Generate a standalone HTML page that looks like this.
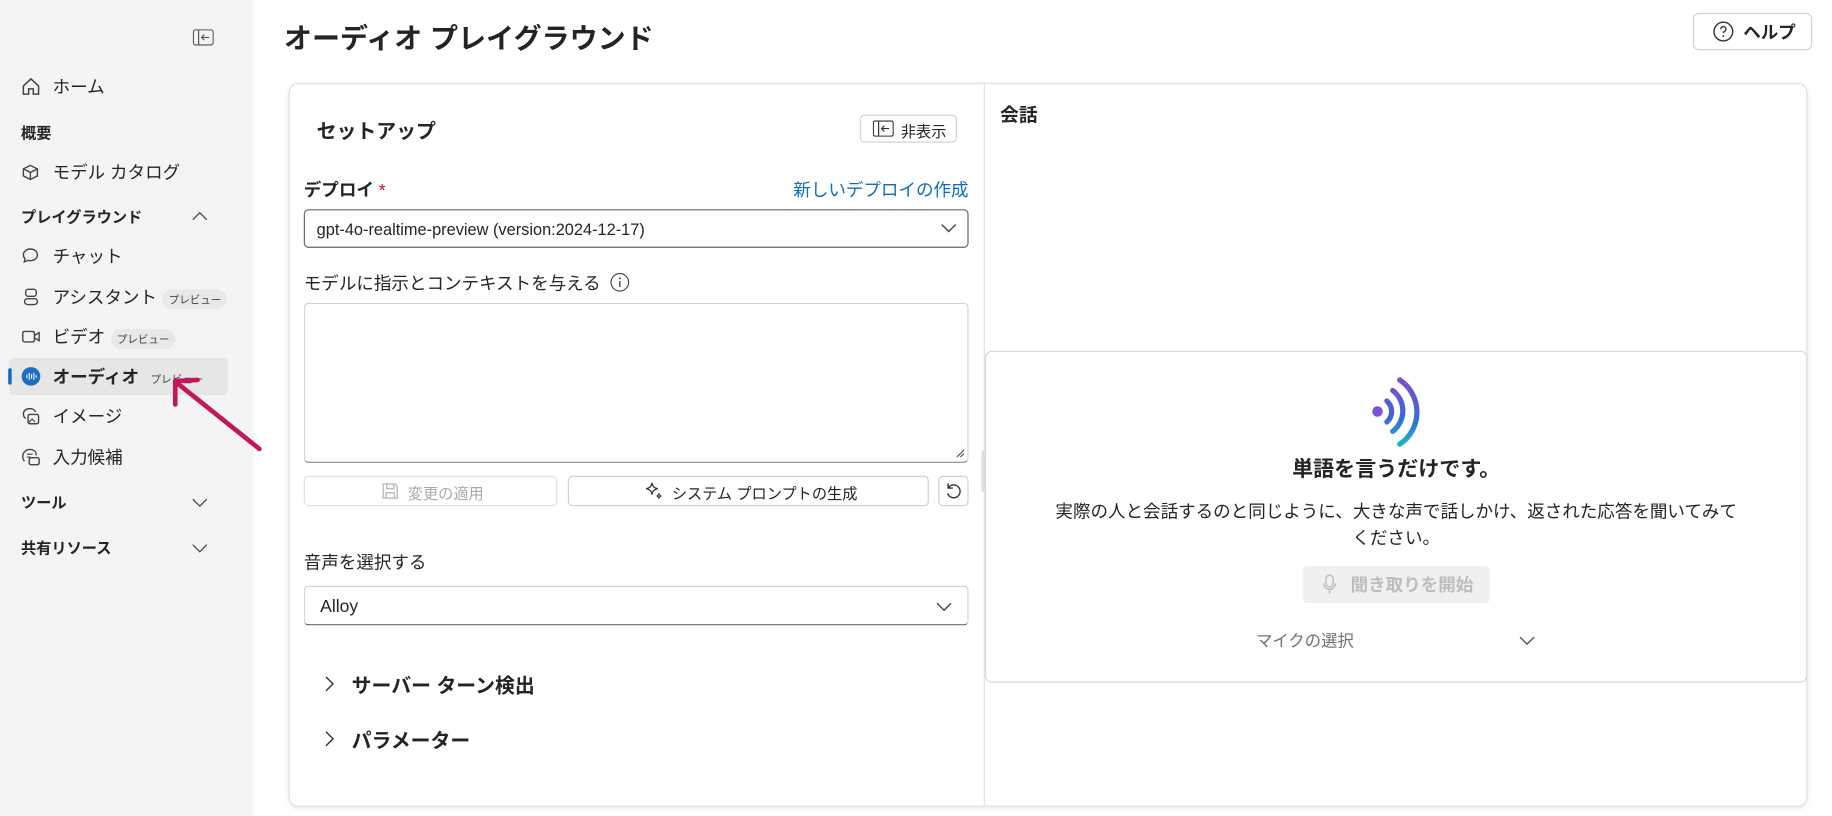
<!DOCTYPE html>
<html><head><meta charset="utf-8"><style>
*{box-sizing:border-box;margin:0;padding:0}
html,body{width:1832px;height:816px;overflow:hidden;background:#fff}
#w{width:1568px;height:698px;transform:scale(1.16837,1.169);transform-origin:0 0;position:relative;font-family:"Liberation Sans","Noto Sans CJK JP",sans-serif;color:#242424}
.a{position:absolute;white-space:nowrap}
.side{position:absolute;left:0;top:0;width:215px;height:698px;background:#f4f4f4;box-shadow:1px 0 3px rgba(0,0,0,.08)}
.it{position:absolute;left:45px;font-size:15px;transform:translateY(-50%);white-space:nowrap}
.ic{position:absolute;left:18px;width:17px;height:17px;transform:translateY(-50%)}
.sec{position:absolute;left:18px;font-size:13px;font-weight:bold;transform:translateY(-50%);white-space:nowrap}
.chev{position:absolute;left:164px;transform:translateY(-50%)}
.pv{display:inline-block;font-size:9px;background:#e8e8e8;border-radius:9px;padding:2px 5px;margin-left:5px;vertical-align:middle;color:#424242}
.box{position:absolute;border:1px solid #d1d1d1;border-radius:4px;background:#fff}
.lbl{position:absolute;font-size:15px;transform:translateY(-50%);white-space:nowrap}
</style></head><body><div id="w">
<div class="side">
<svg class="a" style="left:165px;top:25px" width="18" height="14" viewBox="0 0 18 14"><rect x=".5" y=".5" width="17" height="13" rx="2" fill="none" stroke="#555"/><line x1="5" y1="1" x2="5" y2="13" stroke="#555"/><path d="M14 7H8M10 4.5L7.5 7 10 9.5" fill="none" stroke="#555"/></svg>
<svg class="ic" style="top:74px" viewBox="0 0 17 17"><path d="M2 8L8.5 2 15 8V15H10.5V10.5H6.5V15H2Z" fill="none" stroke="#444" stroke-width="1.3"/></svg><div class="it" style="top:74px">ホーム</div>
<div class="sec" style="top:113px">概要</div>
<svg class="ic" style="top:147px" viewBox="0 0 17 17"><path d="M2 6L8 3 14 6V12L8 15 2 12ZM2 6L8 9 14 6M8 9V15" fill="none" stroke="#444" stroke-width="1.2"/></svg><div class="it" style="top:147px">モデル カタログ</div>
<div class="sec" style="top:185px">プレイグラウンド</div>
<svg class="chev" style="top:185px" width="14" height="8" viewBox="0 0 14 8"><path d="M1 7L7 1 13 7" fill="none" stroke="#555" stroke-width="1.2"/></svg>
<svg class="ic" style="top:219px" viewBox="0 0 17 17"><path d="M8 2.5C4.5 2.5 2 4.8 2 7.5c0 1.3.5 2.4 1.4 3.3L2.8 13.5 6 12.2c.6.2 1.3.3 2 .3 3.5 0 6-2.3 6-5S11.5 2.5 8 2.5z" fill="none" stroke="#444" stroke-width="1.2"/></svg><div class="it" style="top:219px">チャット</div>
<svg class="ic" style="top:254px" viewBox="0 0 17 17"><rect x="4" y="2" width="9" height="6" rx="2" fill="none" stroke="#444" stroke-width="1.2"/><rect x="3" y="10" width="11" height="5" rx="2.5" fill="none" stroke="#444" stroke-width="1.2"/></svg><div class="it" style="top:254px">アシスタント<span class="pv">プレビュー</span></div>
<svg class="ic" style="top:288px" viewBox="0 0 17 17"><rect x="1.5" y="4" width="10" height="9" rx="1.5" fill="none" stroke="#444" stroke-width="1.2"/><path d="M11.5 7.5L15.5 5V12L11.5 9.5" fill="none" stroke="#444" stroke-width="1.2"/></svg><div class="it" style="top:288px">ビデオ<span class="pv">プレビュー</span></div>
<div class="a" style="left:8px;top:306px;width:187px;height:32px;background:#e6e6e6;border-radius:4px"></div>
<div class="a" style="left:7px;top:315px;width:3px;height:14px;background:#0f6cbd;border-radius:2px"></div>
<svg class="ic" style="top:322px" viewBox="0 0 17 17"><circle cx="8.5" cy="8.5" r="8" fill="#1f6fc0"/><path d="M5 7v3M7 5.5v6M9 6.5v4M11 5.5v6M13 7.5v2" stroke="#fff" stroke-width=".9"/></svg><div class="it" style="top:322px;font-weight:bold">オーディオ<span class="pv" style="background:none;font-weight:normal">プレビュー</span></div>
<svg class="ic" style="top:356px" viewBox="0 0 17 17"><path d="M4 10.5C2.5 9.5 2 8 2 6.5 2 4 4.5 2 7.5 2c2.3 0 4.3 1.2 5 3" fill="none" stroke="#444" stroke-width="1.2"/><rect x="6" y="7" width="9" height="8" rx="1.5" fill="none" stroke="#444" stroke-width="1.2"/><path d="M6.5 14L9.5 11 12 13.5" fill="none" stroke="#444"/></svg><div class="it" style="top:356px">イメージ</div>
<svg class="ic" style="top:391px" viewBox="0 0 17 17"><path d="M3 12C1.8 11 1.5 9.5 1.5 8 1.5 4.5 4 2 7.5 2S13 4 13 7" fill="none" stroke="#444" stroke-width="1.2"/><rect x="7" y="9" width="8.5" height="6" rx="1.5" fill="none" stroke="#444" stroke-width="1.2"/><path d="M5 6h5M5 8.5h3" stroke="#444"/></svg><div class="it" style="top:391px">入力候補</div>
<div class="sec" style="top:429px">ツール</div>
<svg class="chev" style="top:430px" width="14" height="8" viewBox="0 0 14 8"><path d="M1 1L7 7 13 1" fill="none" stroke="#555" stroke-width="1.2"/></svg>
<div class="sec" style="top:468px">共有リソース</div>
<svg class="chev" style="top:469px" width="14" height="8" viewBox="0 0 14 8"><path d="M1 1L7 7 13 1" fill="none" stroke="#555" stroke-width="1.2"/></svg>
</div>
<svg class="a" style="left:140px;top:315px" width="90" height="75" viewBox="0 0 90 75"><path d="M82 69L12 13" stroke="#c2185b" stroke-width="4" stroke-linecap="round"/><path d="M10 31L10 11 29 10" fill="none" stroke="#c2185b" stroke-width="4" stroke-linecap="round" stroke-linejoin="round"/></svg>

<div class="a" style="left:243px;top:13px;font-size:24px;font-weight:bold">オーディオ プレイグラウンド</div>
<div class="box" style="left:1449px;top:11px;width:102px;height:32px;border-radius:5px"></div>
<svg class="a" style="left:1466px;top:18px" width="18" height="18" viewBox="0 0 18 18"><circle cx="9" cy="9" r="8" fill="none" stroke="#333" stroke-width="1.2"/><path d="M6.8 7a2.2 2.2 0 1 1 3 2c-.6.3-.8.7-.8 1.3" fill="none" stroke="#333" stroke-width="1.2"/><circle cx="9" cy="13" r=".8" fill="#333"/></svg>
<div class="a" style="left:1492px;top:17px;font-size:15px;font-weight:bold">ヘルプ</div>

<div class="a" style="left:247px;top:71px;width:1300px;height:619px;border:1px solid #e0e0e0;border-radius:8px;box-shadow:0 1px 4px rgba(0,0,0,.1)"></div>
<div class="a" style="left:842px;top:72px;width:1px;height:617px;background:#e3e3e3"></div>
<div class="a" style="left:840px;top:385px;width:4px;height:36px;background:#ddd;border-radius:2px"></div>

<div class="a" style="left:271px;top:98px;font-size:17px;font-weight:bold">セットアップ</div>
<div class="box" style="left:736px;top:98px;width:83px;height:24px"></div>
<svg class="a" style="left:747px;top:103px" width="18" height="14" viewBox="0 0 18 14"><rect x=".5" y=".5" width="17" height="13" rx="1.5" fill="none" stroke="#333"/><line x1="5" y1="1" x2="5" y2="13" stroke="#333"/><path d="M14 7H8M10 4.5L7.5 7 10 9.5" fill="none" stroke="#333"/></svg>
<div class="a" style="left:771px;top:102px;font-size:13px">非表示</div>
<div class="lbl" style="left:260px;top:162px;font-weight:bold">デプロイ <span style="color:#c50f1f;font-weight:normal">*</span></div>
<div class="lbl" style="right:739px;top:162px;color:#0f6cbd">新しいデプロイの作成</div>
<div class="box" style="left:260px;top:179px;width:569px;height:33px;border-color:#666"></div>
<div class="lbl" style="left:271px;top:196px;font-size:14px">gpt-4o-realtime-preview (version:2024-12-17)</div>
<svg class="a" style="left:805px;top:191px" width="14" height="8" viewBox="0 0 14 8"><path d="M1 1L7 7 13 1" fill="none" stroke="#444" stroke-width="1.2"/></svg>
<div class="lbl" style="left:260px;top:242px">モデルに指示とコンテキストを与える</div>
<svg class="a" style="left:522px;top:233px" width="17" height="17" viewBox="0 0 17 17"><circle cx="8.5" cy="8.5" r="7.5" fill="none" stroke="#444"/><path d="M8.5 7.5v5" stroke="#444" stroke-width="1.2"/><circle cx="8.5" cy="5" r=".8" fill="#444"/></svg>
<div class="box" style="left:260px;top:259px;width:569px;height:137px;border-bottom-color:#777"></div>
<svg class="a" style="left:818px;top:384px" width="8" height="8" viewBox="0 0 8 8"><path d="M7 1L1 7M7 4L4 7" stroke="#555"/></svg>
<div class="box" style="left:260px;top:407px;width:217px;height:26px;border-color:#e0e0e0"></div>
<svg class="a" style="left:326px;top:412px" width="16" height="16" viewBox="0 0 16 16"><path d="M2 2h10l2 2v10H2z M5 2v4h6V2 M4.5 14V9.5h7V14" fill="none" stroke="#bbb" stroke-width="1.2"/></svg>
<div class="a" style="left:349px;top:412px;font-size:13px;color:#aaa">変更の適用</div>
<div class="box" style="left:486px;top:407px;width:309px;height:26px"></div>
<svg class="a" style="left:551px;top:411px" width="18" height="18" viewBox="0 0 18 18"><path d="M7 2Q7.6 6.4 12 7 7.6 7.6 7 12 6.4 7.6 2 7 6.4 6.4 7 2z" fill="none" stroke="#333" stroke-width="1.1"/><path d="M13 11Q13.3 13 15 13.3 13.3 13.6 13 15.5 12.7 13.6 11 13.3 12.7 13 13 11z" fill="none" stroke="#333"/></svg>
<div class="a" style="left:575px;top:412px;font-size:13px">システム プロンプトの生成</div>
<div class="box" style="left:803px;top:407px;width:26px;height:26px"></div>
<svg class="a" style="left:808px;top:412px" width="16" height="16" viewBox="0 0 16 16"><path d="M3.5 5.5A5.5 5.5 0 1 1 3 10M3.5 1.5v4h4" fill="none" stroke="#333" stroke-width="1.2"/></svg>
<div class="lbl" style="left:260px;top:481px">音声を選択する</div>
<div class="box" style="left:260px;top:501px;width:569px;height:34px;border-bottom-color:#555"></div>
<div class="lbl" style="left:274px;top:519px">Alloy</div>
<svg class="a" style="left:801px;top:515px" width="14" height="8" viewBox="0 0 14 8"><path d="M1 1L7 7 13 1" fill="none" stroke="#444" stroke-width="1.2"/></svg>
<svg class="a" style="left:278px;top:578px" width="8" height="14" viewBox="0 0 8 14"><path d="M1 1L7 7 1 13" fill="none" stroke="#333" stroke-width="1.2"/></svg>
<div class="lbl" style="left:301px;top:585px;font-size:17px;font-weight:bold">サーバー ターン検出</div>
<svg class="a" style="left:278px;top:625px" width="8" height="14" viewBox="0 0 8 14"><path d="M1 1L7 7 1 13" fill="none" stroke="#333" stroke-width="1.2"/></svg>
<div class="lbl" style="left:301px;top:632px;font-size:17px;font-weight:bold">パラメーター</div>

<div class="lbl" style="left:856px;top:97px;font-size:16px;font-weight:bold">会話</div>
<div class="a" style="left:843px;top:300px;width:704px;height:284px;border:1px solid #d6d6d6;border-radius:6px;background:#fff"></div>
<svg class="a" style="left:1170px;top:320px" width="50" height="66" viewBox="0 0 50 66"><defs><linearGradient id="g" x1="0" y1="0" x2="0" y2="1"><stop offset="0" stop-color="#7b4fd1"/><stop offset=".6" stop-color="#3a6ad6"/><stop offset="1" stop-color="#1fb3c4"/></linearGradient></defs><circle cx="9" cy="32" r="4.5" fill="#7b52d3"/><path d="M17 23a12 12 0 0 1 0 18M22 14a22 22 0 0 1 0 35M28 5a33 33 0 0 1 0 55" fill="none" stroke="url(#g)" stroke-width="4.5" stroke-linecap="round"/></svg>
<div class="lbl" style="left:1195px;top:400px;transform:translate(-50%,-50%);font-size:18px;font-weight:bold">単語を言うだけです。</div>
<div class="lbl" style="left:1195px;top:437px;transform:translate(-50%,-50%);font-size:15px">実際の人と会話するのと同じように、大きな声で話しかけ、返された応答を聞いてみて</div>
<div class="lbl" style="left:1195px;top:460px;transform:translate(-50%,-50%);font-size:15px">ください。</div>
<div class="a" style="left:1115px;top:484px;width:160px;height:32px;background:#f0f0f0;border-radius:4px"></div>
<svg class="a" style="left:1132px;top:491px" width="12" height="18" viewBox="0 0 12 18"><rect x="3" y="1" width="6" height="10" rx="3" fill="none" stroke="#bbb" stroke-width="1.2"/><path d="M1 8a5 5 0 0 0 10 0M6 13v4" fill="none" stroke="#bbb" stroke-width="1.2"/></svg>
<div class="lbl" style="left:1156px;top:500px;font-size:15px;font-weight:bold;color:#bdbdbd">聞き取りを開始</div>
<div class="lbl" style="left:1075px;top:548px;font-size:14px;color:#707070">マイクの選択</div>
<svg class="a" style="left:1300px;top:544px" width="14" height="8" viewBox="0 0 14 8"><path d="M1 1L7 7 13 1" fill="none" stroke="#555" stroke-width="1.2"/></svg>
</div></body></html>
